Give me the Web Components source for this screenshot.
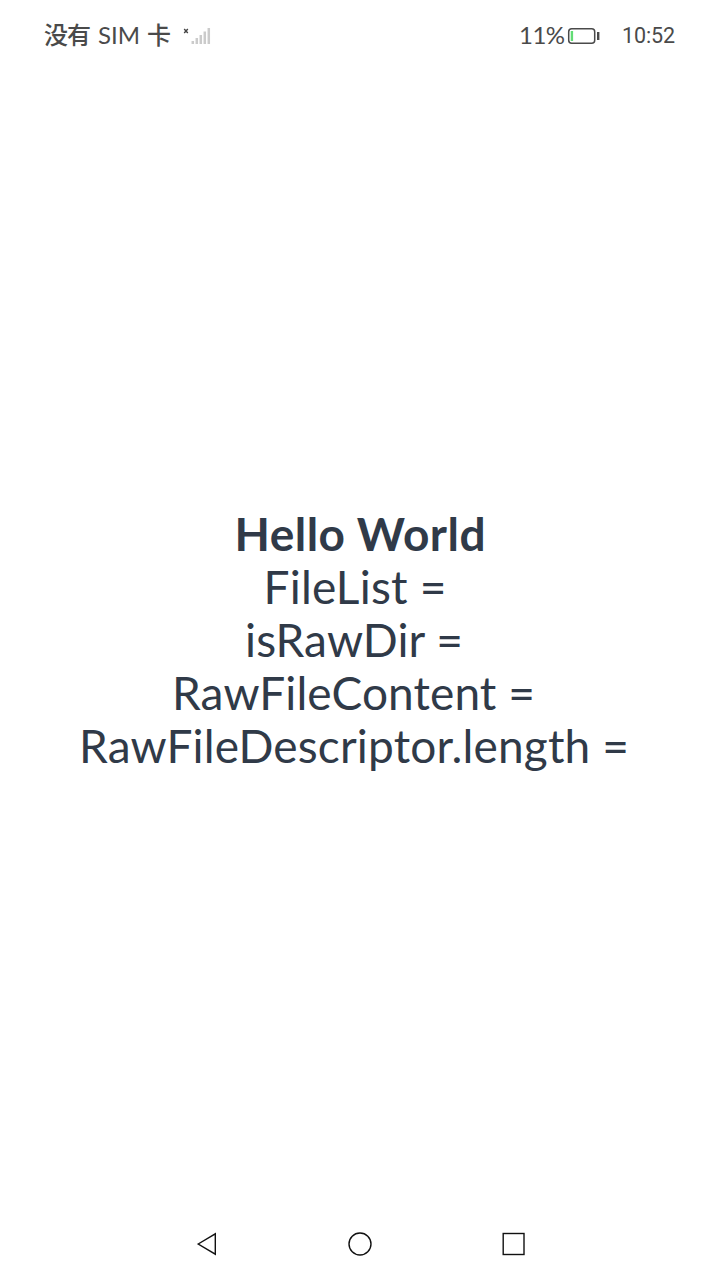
<!DOCTYPE html>
<html lang="zh-CN">
<head>
<meta charset="utf-8">
<title>Hello World</title>
<style>
html,body{margin:0;height:100%;background:#fff}
</style>
</head>
<body>
<phone-screen>
  <status-bar slot="top"></status-bar>
  <text-line bold w="251">Hello World</text-line>
  <text-line w="183" trail="10">FileList =</text-line>
  <text-line w="218" trail="12">isRawDir =</text-line>
  <text-line w="363" trail="13">RawFileContent =</text-line>
  <text-line w="550" trail="12">RawFileDescriptor.length =</text-line>
  <nav-bar slot="bottom"></nav-bar>
</phone-screen>
<script>
const define = (name, html, setup) => customElements.define(name, class extends HTMLElement {
  constructor() {
    super();
    this.attachShadow({mode: 'open'}).innerHTML = html;
  }
  connectedCallback() { if (setup) setup(this); }
});

// Spreads the letters of an element so that its text fills a given width.
function track(el, width) {
  el.style.letterSpacing = '0px';
  const n = el.textContent.length;
  const s = (width - el.getBoundingClientRect().width) / (n - 1);
  el.style.letterSpacing = s + 'px';
  el.style.marginRight = -s + 'px';
}

define('phone-screen', `
<style>
:host{display:flex;flex-direction:column;width:720px;height:1280px;background:#fff;overflow:hidden}
main{flex:1;display:flex;flex-direction:column;align-items:center;justify-content:center;padding-bottom:2px}
</style>
<slot name="top"></slot><main><slot></slot></main><slot name="bottom"></slot>`);

define('text-line', `
<style>
:host{display:block;height:53px;line-height:53px;font-family:Lato,sans-serif;font-size:46px;color:#303a48}
:host([bold]){font-weight:700}
span{display:inline-block;white-space:pre}
</style><span></span>`, el => {
  const s = el.shadowRoot.querySelector('span');
  s.textContent = el.textContent;
  track(s, +el.getAttribute('w'));
  el.style.paddingRight = (el.getAttribute('trail') || 0) + 'px';
});

define('status-bar', `
<style>
:host{display:flex;align-items:center;box-sizing:border-box;height:72px;padding:0 45px 2px 44px;color:#4a4a4a;font-family:Lato,"Noto Sans CJK SC",sans-serif;font-size:24px;line-height:30px;white-space:pre}
span{display:block}
.cjk{font-weight:500}
.sim{margin:0 7px 0 7px}
.ka{margin-left:7px}
.net{margin:2px 0 0 12px}
.gap{flex:1}
.bat{margin:2px 0 0 2px}
.time{font-family:Roboto,sans-serif;font-size:21.5px;margin:2px 0 0 22px}
svg{display:block}
</style>
<span class="cjk" data-w="47">没有</span><span class="sim" data-w="42">SIM</span><span class="cjk ka">卡</span>
<svg class="net" width="28" height="20" viewBox="0 0 28 20"><path d="M1.2 3l3.600 4M4.800 3l-3.600 4" stroke="#444" stroke-width="1.400"/><path d="M9.800 18v-3M13.800 18v-6M17.800 18V9M21.800 18V5.500M25.800 18V2" stroke="#cbcbcb" stroke-width="2.500"/></svg>
<span class="gap"></span>
<span data-w="46">11%</span>
<svg class="bat" width="33" height="18" viewBox="0 0 33 18"><rect x="1.700" y="1.700" width="26" height="14.600" rx="3" fill="none" stroke="#4a4a4a" stroke-width="1.500"/><path d="M4.900 4v10" stroke="#62dc75" stroke-width="2.400"/><path d="M31.200 5v8" stroke="#4a4a4a" stroke-width="2.400"/></svg>
<span class="time" data-w="53">10:52</span>`, el => {
  el.shadowRoot.querySelectorAll('[data-w]').forEach(s => track(s, +s.dataset.w));
});

define('nav-bar', `
<style>
:host{display:flex;align-items:center;justify-content:center;gap:128px;height:72px}
svg{display:block;fill:none;stroke:#111;stroke-width:1.400}
</style>
<svg width="26" height="26" viewBox="0 0 26 26"><path d="M5.200 13L22.300 2.800V23.200Z"/></svg>
<svg width="26" height="26" viewBox="0 0 26 26"><circle cx="13" cy="13" r="11"/></svg>
<svg width="26" height="26" viewBox="0 0 26 26"><rect x="2.200" y="2.500" width="20.800" height="21"/></svg>`);
</script>
</body>
</html>
